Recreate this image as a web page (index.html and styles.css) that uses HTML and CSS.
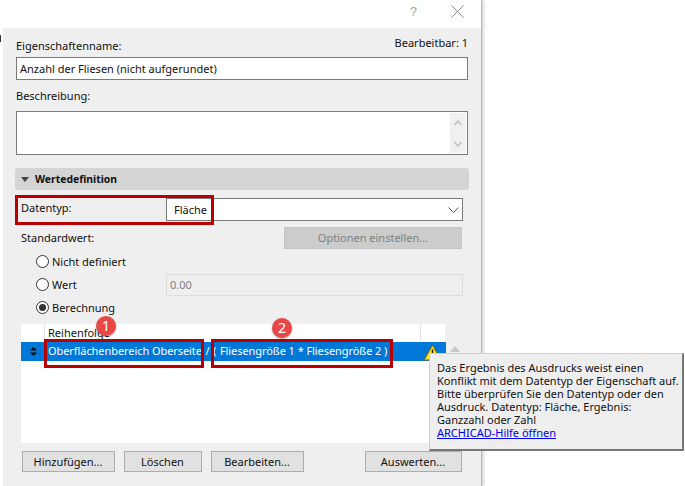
FILE: index.html
```html
<!DOCTYPE html>
<html lang="de">
<head>
<meta charset="utf-8">
<title>Eigenschaft</title>
<link rel="stylesheet" href="styles.css">
</head>
<body>
<div class="tick"></div>
<div class="window">
  <div class="titlebar">
    <span class="help">?</span>
    <svg class="close" width="13" height="13" viewBox="0 0 13 13"><path d="M.5.5l12 12M12.5.5l-12 12" stroke="#8a8a8a" stroke-width="1" fill="none"/></svg>
  </div>
  <div class="panel">
    <div class="name-head"><span class="label">Eigenschaftenname:</span><span class="label editable">Bearbeitbar: 1</span></div>
    <div class="field name-field">Anzahl der Fliesen (nicht aufgerundet)</div>
    <div class="label desc-label">Beschreibung:</div>
    <div class="field desc-field">
      <div class="scroll">
        <svg width="8" height="6" viewBox="0 0 8 6"><path d="M.5 5L4 1.2 7.5 5" stroke="#c2c2c2" stroke-width="1.6" fill="none"/></svg>
        <svg width="8" height="6" viewBox="0 0 8 6"><path d="M.5 1L4 4.8 7.5 1" stroke="#c2c2c2" stroke-width="1.6" fill="none"/></svg>
      </div>
    </div>
    <div class="section"><svg width="8" height="5" viewBox="0 0 8 5"><path d="M0 0h8L4 5z" fill="#444"/></svg><span>Wertedefinition</span></div>
    <div class="row type-row">
      <span class="label col-label">Datentyp:</span>
      <div class="field select"><span>Fläche</span><svg width="11" height="6" viewBox="0 0 11 6"><path d="M.5.5l5 5 5-5" stroke="#555" stroke-width="1" fill="none"/></svg></div>
    </div>
    <div class="row std-row">
      <span class="label">Standardwert:</span>
      <div class="btn-disabled">Optionen einstellen...</div>
    </div>
    <div class="radio-row r1"><span class="radio"></span><span class="label">Nicht definiert</span></div>
    <div class="radio-row r2"><span class="radio"></span><span class="label wert">Wert</span><div class="value-input">0.00</div></div>
    <div class="radio-row r3"><span class="radio on"></span><span class="label">Berechnung</span></div>
    <div class="list-wrap">
      <div class="list">
        <div class="list-head"><span class="c1"></span><span class="c2">Reihenfolge</span><span class="c3"></span></div>
        <div class="list-row">
          <span class="c1"><svg width="7" height="9" viewBox="0 0 7 9"><path d="M3.5 0L7 3.5H0zM3.5 9L0 5.5h7z" fill="#111"/></svg></span>
          <span class="c2">Oberflächenbereich Oberseite<span class="sep"> / ( </span>Fliesengröße 1 * Fliesengröße 2 )</span>
          <span class="c3"></span>
        </div>
      </div>
      <svg class="list-up" width="10" height="6" viewBox="0 0 10 6"><path d="M5 0l5 6H0z" fill="#c8c8c8"/></svg>
    </div>
    <div class="buttons">
      <div class="btn b-add">Hinzufügen...</div>
      <div class="btn b-del">Löschen</div>
      <div class="btn b-edit">Bearbeiten...</div>
      <div class="btn b-eval">Auswerten...</div>
    </div>
  </div>
</div>
<div class="mark m-type"></div>
<div class="mark m-one"></div>
<div class="mark m-two"></div>
<div class="badge b-one">1</div>
<div class="badge b-two">2</div>
<svg class="warn" width="19" height="17" viewBox="0 0 19 17"><path d="M9.5 1L18 16H1z" fill="#fbdc1e" stroke="#6b6420" stroke-width="1"/><path d="M8.7 5.5h1.6l-.3 6H9zM8.7 12.5h1.6v1.8H8.7z" fill="#222"/></svg>
<div class="tooltip">
  Das Ergebnis des Ausdrucks weist einen<br>
  Konflikt mit dem Datentyp der Eigenschaft auf.<br>
  Bitte überprüfen Sie den Datentyp oder den<br>
  Ausdruck. Datentyp: Fläche, Ergebnis:<br>
  Ganzzahl oder Zahl<br>
  <a class="link">ARCHICAD-Hilfe öffnen</a>
</div>
</body>
</html>
```
FILE: styles.css
```css
* { box-sizing: border-box; }
html, body { margin: 0; height: 100%; background: #fff; overflow: hidden; }
body { font-family: "Noto Sans", sans-serif; font-size: 11px; color: #111; position: relative; }
.tick { position: absolute; left: 0; top: 35px; width: 1px; height: 7px; background: #333; }
.window { width: 481px; height: 486px; background: #fff; box-shadow: 1px 0 0 #b9b9b9, 2px 0 2px #d0d0d0, 4px 0 3px #eee; display: flex; flex-direction: column; }
.titlebar { height: 28px; display: flex; align-items: center; justify-content: flex-end; flex: none; }
.help { color: #a0a0a0; font-family: "Liberation Sans", sans-serif; font-size: 13px; margin-right: 34px; margin-top: -5px; }
.close { margin-right: 17px; margin-top: -5px; }
.panel { flex: 1; margin-left: 3px; background: #efefef; padding: 0 13px; display: flex; flex-direction: column; }
.label { line-height: 16px; white-space: nowrap; }
.name-head { display: flex; justify-content: space-between; height: 29px; padding-top: 10px; }
.editable { margin-top: -3px; }
.field { background: #fff; border: 1px solid #7a7a7a; }
.name-field { height: 23px; line-height: 21px; padding-left: 3px; }
.desc-label { margin-top: 8px; height: 23px; }
.desc-field { height: 44px; display: flex; justify-content: flex-end; padding: 1px; }
.scroll { width: 16px; background: #f0f0f0; display: flex; flex-direction: column; justify-content: space-between; align-items: center; padding: 7px 0 6px; }
.section { height: 22px; margin: 13px -1px 0 -1px; background: #d4d4d4; border-radius: 3px; display: flex; align-items: center; gap: 6px; padding-left: 6px; font-weight: 700; font-size: 10.4px; }
.row { display: flex; margin-left: 5px; margin-right: 5px; }
.type-row { margin-top: 8px; height: 23px; }
.col-label { width: 145px; line-height: 19px; }
.select { flex: 1; display: flex; justify-content: space-between; align-items: center; padding: 0 3px 0 7px; }
.std-row { margin-top: 6px; height: 22px; justify-content: space-between; align-items: center; margin-right: 6px; }
.btn-disabled { width: 178px; height: 22px; background: #cccccc; border: 1px solid #c4c4c4; color: #7f7f7f; text-align: center; line-height: 20px; }
.radio-row { display: flex; align-items: center; margin-left: 20px; height: 23px; }
.r1 { margin-top: 1px; }
.radio { width: 13px; height: 13px; border-radius: 50%; background: #fff; border: 1px solid #333; margin-right: 3px; flex: none; display: flex; align-items: center; justify-content: center; }
.radio.on::after { content: ""; width: 7px; height: 7px; border-radius: 50%; background: #333; }
.wert { width: 114px; }
.value-input { width: 297px; height: 22px; background: #efefef; border: 1px solid #dcdcdc; color: #808080; line-height: 20px; padding-left: 3px; }
.list-wrap { position: relative; margin: 5px 0 0 5px; width: 424px; }
.list { background: #fff; height: 119px; }
.list-head, .list-row { display: flex; }
.list-head { height: 18px; line-height: 17px; }
.list-row { height: 19px; line-height: 17px; background: #0078d7; color: #fff; width: 425px; letter-spacing: -.07px; }
.sep { word-spacing: .8px; }
.c1 { width: 24px; flex: none; display: flex; align-items: center; justify-content: center; }
.c2 { flex: 1; padding-left: 3px; white-space: pre; }
.c3 { width: 25px; flex: none; }
.list-head .c1 { border-right: 1px solid #e4e4e4; }
.list-head .c3 { border-left: 1px solid #e4e4e4; }
.list-up { position: absolute; left: 429px; top: 22px; }
.buttons { display: flex; margin: 8px 0 0 6px; }
.btn { height: 21px; background: #e1e1e1; border: 1px solid #adadad; text-align: center; line-height: 19px; padding-right: 1px; }
.b-add { width: 93px; margin-right: 9px; }
.b-del { width: 78px; margin-right: 9px; }
.b-edit { width: 93px; margin-right: 61px; }
.b-eval { width: 97px; }
.mark { position: absolute; border: 3px solid #b90000; }
.m-type { left: 15px; top: 195px; width: 199px; height: 30px; }
.m-one { left: 44px; top: 339px; width: 160px; height: 29px; }
.m-two { left: 211px; top: 339px; width: 182px; height: 29px; }
.badge { position: absolute; width: 20px; height: 20px; border-radius: 50%; background: #e84747; color: #fff; font-size: 14px; line-height: 20px; text-align: center; box-shadow: 0 1px 2px rgba(0,0,0,.35); }
.b-one { left: 96px; top: 316px; }
.b-two { left: 272px; top: 318px; }
.warn { position: absolute; left: 423px; top: 344px; }
.tooltip { position: absolute; left: 429px; top: 353px; width: 255px; height: 98px; background: #eeeeee; border: 1px solid #d0d0d0; border-right: 2px solid #777; border-bottom: 2px solid #777; padding: 7px 0 0 7px; line-height: 13px; white-space: nowrap; }
.link { color: #0000ee; text-decoration: underline; }
```
